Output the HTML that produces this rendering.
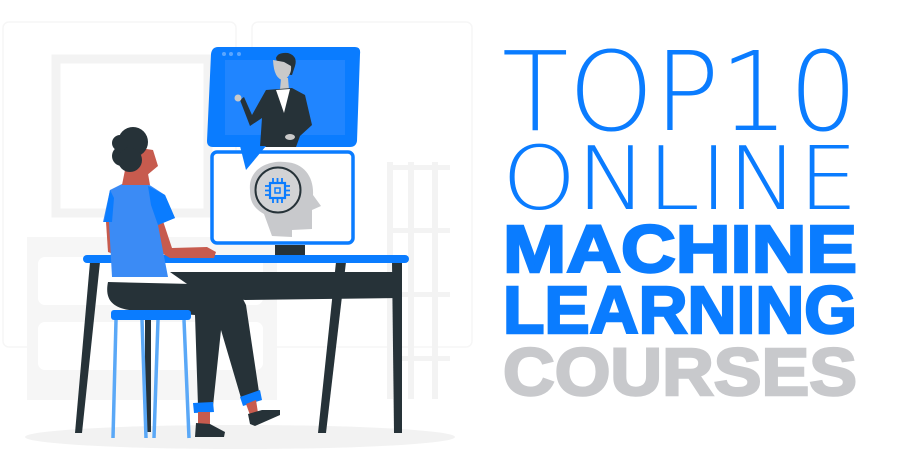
<!DOCTYPE html>
<html><head><meta charset="utf-8"><style>
html,body{margin:0;padding:0;background:#fff;}
svg{display:block}
</style></head><body>
<svg width="900" height="469" viewBox="0 0 900 469" xmlns="http://www.w3.org/2000/svg">
<!-- background -->
<rect x="3" y="22" width="233" height="325" rx="6" fill="none" stroke="#f6f6f6" stroke-width="1.5"/>
<rect x="252" y="22" width="220" height="325" rx="6" fill="none" stroke="#f6f6f6" stroke-width="1.5"/>
<rect x="56" y="59" width="152" height="154" fill="none" stroke="#f3f3f3" stroke-width="9"/>
<rect x="27" y="237" width="250" height="163" fill="#f6f6f6"/>
<rect x="38" y="257" width="225" height="48" rx="7" fill="#fff"/>
<rect x="38" y="322" width="225" height="48" rx="7" fill="#fff"/>
<rect x="387" y="162" width="6" height="237" fill="#f3f3f3"/>
<rect x="408" y="162" width="6" height="237" fill="#f3f3f3"/>
<rect x="432" y="162" width="6" height="237" fill="#f3f3f3"/>
<rect x="387" y="165" width="63" height="5" fill="#f3f3f3"/>
<rect x="387" y="228" width="63" height="5" fill="#f3f3f3"/>
<rect x="387" y="292" width="63" height="5" fill="#f3f3f3"/>
<rect x="387" y="356" width="63" height="5" fill="#f3f3f3"/>
<ellipse cx="240" cy="437" rx="215" ry="12" fill="#f2f2f2"/>

<!-- video screen -->
<path d="M218,47 H355 Q361,47 360,54 L357,141 Q356,147 350,147 H213 Q207,147 207,141 L211,54 Q212,47 218,47Z" fill="#0a7cff"/>
<rect x="225" y="60" width="120" height="75" fill="#2f8cff" opacity="0.6"/>
<circle cx="224" cy="54" r="2" fill="#5aa6ff"/><circle cx="231" cy="54" r="2" fill="#5aa6ff"/><circle cx="239" cy="54" r="2" fill="#5aa6ff"/>
<!-- speaker -->
<path d="M276,58 Q278,52 288,53 Q298,56 295,66 L292,75 L280,74 Z" fill="#263238"/>
<path d="M273,60 Q274,80 284,80 Q292,75 291,66 L284,62 Z" fill="#c9c9c9"/>
<path d="M281,78 L288,78 L289,90 L280,90Z" fill="#c9c9c9"/>
<path d="M266,90 L292,88 L305,95 L312,125 L300,136 L296,147 L260,147 L262,118 L250,126 L240,100 L244,97 L252,115 Z" fill="#263238"/>
<path d="M276,90 L290,89 L284,113 Z" fill="#fff"/>
<circle cx="238" cy="98" r="3.5" fill="#c9c9c9"/>
<ellipse cx="290" cy="137" rx="5" ry="3" fill="#c9c9c9"/>

<!-- lower monitor -->
<rect x="212" y="152" width="141" height="91" rx="5" fill="#fff" stroke="#0a7cff" stroke-width="3.5"/>
<path d="M240,146 L266,146 L246,170 Z" fill="#0a7cff"/>
<path d="M250,190 C248,168 270,160 285,162 C305,163 314,178 313,195 L321,206 L312,210 L312,229 L292,230 L292,237 L272,236 L264,214 C252,207 250,200 250,190Z" fill="#c8c9cc"/>
<circle cx="278" cy="190" r="22.5" fill="#d2d3d5" stroke="#263238" stroke-width="2"/>
<rect x="270" y="183" width="15" height="15" fill="none" stroke="#0a7cff" stroke-width="2.2"/>
<rect x="275" y="188" width="5" height="5" fill="none" stroke="#0a7cff" stroke-width="1.5"/>
<path d="M273,183v-5M277.5,183v-5M282,183v-5M273,198v5M277.5,198v5M282,198v5M270,186h-5M270,190.5h-5M270,195h-5M285,186h5M285,190.5h5M285,195h5" stroke="#0a7cff" stroke-width="1.8"/>
<rect x="275" y="245" width="30" height="11" fill="#263238"/>

<!-- desk -->
<polygon points="170,272 401,272 401,298 245,300 200,293" fill="#263238"/>
<polygon points="90,262 100,262 82,433 75,433" fill="#263238"/>
<polygon points="336,262 346,262 326,433 318,433" fill="#263238"/>
<polygon points="392,262 402,262 402,433 394,433" fill="#263238"/>
<rect x="83" y="255" width="326" height="8" rx="4" fill="#0a7cff"/>

<!-- stool -->
<line x1="148" y1="320" x2="148" y2="432" stroke="#263238" stroke-width="6"/>
<g stroke="#5aa8f7" stroke-width="3.5">
<line x1="116" y1="320" x2="113" y2="438"/><line x1="142" y1="320" x2="146" y2="438"/>
<line x1="158" y1="320" x2="154" y2="438"/><line x1="184" y1="320" x2="189" y2="438"/>
</g>

<!-- person -->
<path d="M108,282 C104,302 115,309 136,311 L195,315 L198,406 L213,406 L221,330 L241,398 L259,392 L246,305 L236,285 Z" fill="#263238"/>
<rect x="111" y="310" width="80" height="10" rx="3" fill="#0a7cff"/>
<path d="M193,403 L213,402 L214,412 L194,413Z" fill="#0a7cff"/>
<path d="M240,397 L260,390 L262,400 L243,406Z" fill="#0a7cff"/>
<path d="M198,412 L210,412 L210,425 L198,425Z" fill="#c75b4e"/>
<path d="M246,404 L256,400 L258,413 L250,415Z" fill="#c75b4e"/>
<path d="M196,423 L210,424 L225,432 L224,437 L195,437Z" fill="#263238"/>
<path d="M248,414 L262,410 L280,410 L280,415 L255,426 L250,424Z" fill="#263238"/>
<!-- arms -->
<path d="M106,222 L114,222 L116,255 L108,252Z" fill="#c75b4e"/>
<path d="M152,218 L162,218 L172,248 L207,247 L216,252 L214,258 L170,258 L160,252Z" fill="#c75b4e"/>
<!-- shirt -->
<path d="M110,190 L122,184 L148,184 L165,195 L175,218 L158,225 L168,277 L112,277 L109,222 L103,222 Z" fill="#3b8bf5"/>
<path d="M148,186 L165,195 L175,218 L158,225 L151,205Z" fill="#0a7cff"/>
<path d="M110,190 L104,222 L112,222 L114,198Z" fill="#0a7cff"/>
<!-- head -->
<path d="M125,170 L147,168 L150,185 L122,185Z" fill="#c75b4e"/>
<path d="M140,148 L153,150 L158,166 L146,176 L138,172Z" fill="#c75b4e"/>
<circle cx="133" cy="142" r="15" fill="#263238"/>
<circle cx="122" cy="156" r="10" fill="#263238"/>
<circle cx="130" cy="160" r="12" fill="#263238"/>
<circle cx="120" cy="143" r="8" fill="#263238"/>

<!-- title text -->
<g font-family="Liberation Sans, sans-serif">
<text x="502" y="130" font-size="110" font-family="DejaVu Sans ExtraLight, DejaVu Sans, sans-serif" font-weight="200" fill="#0a7cff" textLength="356" lengthAdjust="spacingAndGlyphs">TOP10</text>
<text x="502" y="209" font-size="87" font-family="DejaVu Sans ExtraLight, DejaVu Sans, sans-serif" font-weight="200" fill="#0a7cff" textLength="356" lengthAdjust="spacingAndGlyphs">ONLINE</text>
<text x="503" y="272" font-size="67" font-weight="bold" fill="#0a7cff" stroke="#0a7cff" stroke-width="2.5" textLength="354" lengthAdjust="spacingAndGlyphs">MACHINE</text>
<text x="503" y="333" font-size="67" font-weight="bold" fill="#0a7cff" stroke="#0a7cff" stroke-width="2.5" textLength="354" lengthAdjust="spacingAndGlyphs">LEARNING</text>
<text x="503" y="395" font-size="67" font-weight="bold" fill="#c8c9cc" stroke="#c8c9cc" stroke-width="2.5" textLength="354" lengthAdjust="spacingAndGlyphs">COURSES</text>
</g>
</svg>
</body></html>
